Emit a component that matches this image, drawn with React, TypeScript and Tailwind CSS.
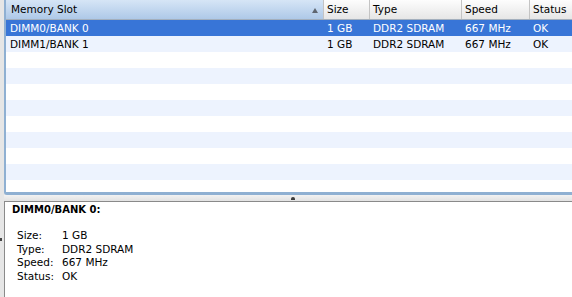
interface Slot {
	slot: string
	size: string
	type: string
	speed: string
	status: string
}

const slots: Slot[] = [
	{ slot: 'DIMM0/BANK 0', size: '1 GB', type: 'DDR2 SDRAM', speed: '667 MHz', status: 'OK' },
	{ slot: 'DIMM1/BANK 1', size: '1 GB', type: 'DDR2 SDRAM', speed: '667 MHz', status: 'OK' }
]

const HeaderCell = ({
	label,
	className
}: {
	label: string
	className: string
}) => (
	<div
		className={`flex h-full items-center border-r border-[#c4c4c4] bg-gradient-to-b from-[#fdfdfd] to-[#e6e6e6] pl-[3px] ${className}`}
	>
		{label}
	</div>
)

const Row = ({ item, index }: { item?: Slot; index: number }) => {
	const selected = index === 0
	const bg = selected ? 'bg-[#3875d7] text-white' : index % 2 === 1 ? 'bg-[#edf3fe]' : 'bg-white'
	return (
		<div className={`flex h-[16px] shrink-0 items-center ${bg}`}>
			<div className="w-[318px] shrink-0 pl-[4px]">{item?.slot}</div>
			<div className="w-[46px] shrink-0 pl-[3px]">{item?.size}</div>
			<div className="w-[92px] shrink-0 pl-[3px]">{item?.type}</div>
			<div className="w-[68px] shrink-0 pl-[3px]">{item?.speed}</div>
			<div className="flex-1 pl-[3px]">{item?.status}</div>
		</div>
	)
}

const Detail = ({ label, value }: { label: string; value: string }) => (
	<div className="flex">
		<span className="w-[45px] shrink-0">{label}</span>
		<span>{value}</span>
	</div>
)

export default function App() {
	const rows = Array.from({ length: 11 }, (_, i) => slots[i])
	const current = slots[0]

	return (
		<div className="relative flex h-[297px] w-[572px] flex-col overflow-hidden bg-[#e6e6e6] pl-[4px] font-['DejaVu_Sans',sans-serif] text-[10.5px] leading-none text-black">
			<section className="flex h-[195px] shrink-0 flex-col overflow-hidden rounded-bl-[3px] border-b-[3px] border-l-2 border-[#8fb0d2] bg-white">
				<header className="flex h-[20px] shrink-0 border-b border-[#a3afbd]">
					<div className="relative flex h-full w-[318px] shrink-0 items-center border-r border-[#c4c4c4] bg-gradient-to-b from-[#d6e5f6] to-[#aec9e8] pl-[5px]">
						Memory Slot
						<svg
							className="absolute top-[8px] left-[306px]"
							width="6"
							height="5"
							viewBox="0 0 6 5"
						>
							<polygon points="3,0 6,5 0,5" fill="#5f6670" />
						</svg>
					</div>
					<HeaderCell label="Size" className="w-[46px] shrink-0" />
					<HeaderCell label="Type" className="w-[92px] shrink-0" />
					<HeaderCell label="Speed" className="w-[68px] shrink-0" />
					<HeaderCell label="Status" className="flex-1 border-r-0" />
				</header>
				{rows.map((item, i) => (
					<Row key={i} item={item} index={i} />
				))}
			</section>

			<div className="flex h-[6px] shrink-0 items-center justify-center bg-gradient-to-b from-[#f2f2f2] to-[#e2e2e2] pl-[10px]">
				<div className="h-[3px] w-[4px] rounded-t-[2px] bg-[#3c3c3c]" />
			</div>

			<section className="flex flex-1 flex-col border-t border-l border-[#8a8a8a] bg-white pt-[2px]">
				<h2 className="pl-[7px] text-[10px] leading-[12px] font-bold">
					{current.slot}:
				</h2>
				<div className="mt-[13px] flex flex-col pl-[12px] leading-[13.5px]">
					<Detail label="Size:" value={current.size} />
					<Detail label="Type:" value={current.type} />
					<Detail label="Speed:" value={current.speed} />
					<Detail label="Status:" value={current.status} />
				</div>
			</section>

			<span className="absolute top-[238px] left-0 h-[3px] w-[2px] bg-[#444]" />
		</div>
	)
}
